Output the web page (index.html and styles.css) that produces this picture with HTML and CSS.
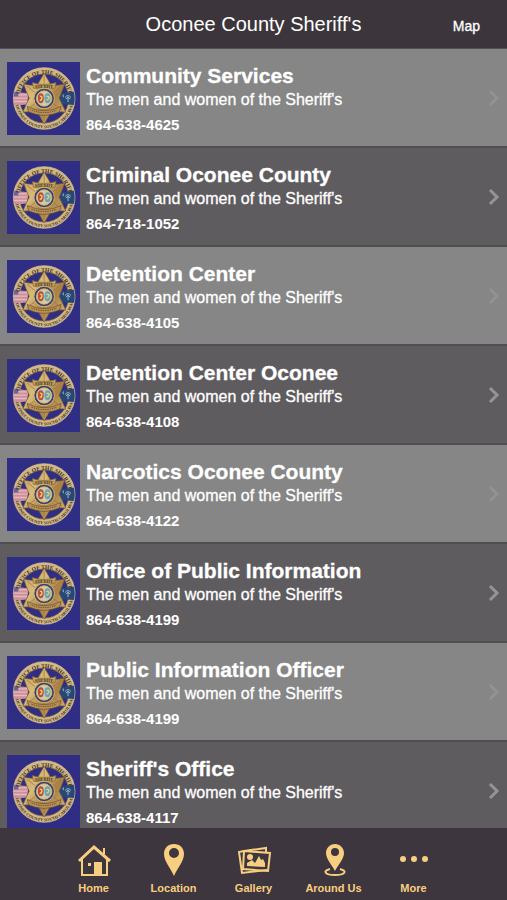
FILE: index.html
```html
<!DOCTYPE html>
<html lang="en">
<head>
<meta charset="utf-8">
<meta name="viewport" content="width=device-width, initial-scale=1">
<title>Oconee County Sheriff's</title>
<link rel="stylesheet" href="styles.css">
</head>
<body>
<header class="topbar">
  <h1 class="topbar-title">Oconee County Sheriff's</h1>
  <a class="topbar-link" href="#map">Map</a>
</header>

<main class="content">
  <ul class="list">
    <li><a class="row" href="#community"><svg class="thumb" viewBox="0 0 220 220">
      <defs>
        <linearGradient id="gold" x1="0" y1="0" x2="1" y2="1">
          <stop offset="0" stop-color="#c49a58"/>
          <stop offset="0.35" stop-color="#d9bb78"/>
          <stop offset="0.6" stop-color="#a97f42"/>
          <stop offset="1" stop-color="#dcc088"/>
        </linearGradient>
        <path id="arc-top" d="M37 124A76 76 0 1 1 187 124"/>
        <path id="arc-bottom" d="M24 112A88 88 0 0 0 200 112"/>
        <clipPath id="gap"><circle cx="112" cy="110" r="92"/></clipPath>
      </defs>
      <g id="badge">
        <rect width="220" height="220" fill="#302d84"/>
        <circle cx="112" cy="110" r="83" fill="none" stroke="#d3b883" stroke-width="19"/>
        <circle cx="112" cy="110" r="93" fill="none" stroke="#e0c890" stroke-width="2"/>
        <circle cx="112" cy="110" r="74" fill="none" stroke="#6f5836" stroke-width="2"/>
        <g clip-path="url(#gap)">
          <path d="M18 90L66 94L60 128L18 132Z" fill="#cf8f98"/>
          <path d="M18 99H62M18 109H60M18 119H60" stroke="#e3bcc0" stroke-width="4"/>
          <path d="M18 90H34V104H18Z" fill="#65659c"/>
          <path d="M158 95L206 89V130L160 127Z" fill="#254878"/>
          <path d="M184 121V105M175 107Q184 96 193 107M178 112Q184 102 190 112" stroke="#a8b8bd" stroke-width="3" fill="none"/>
          <path d="M170 98q-4 6 2 8" stroke="#a8b8bd" stroke-width="3" fill="none"/>
        </g>
        <path d="M112 34L132 68Q151 73 174 66Q166 89 157 109Q167 128 177 151Q151 149 132 152L112 187L92 152Q72 149 48 151Q57 128 67 109Q57 89 50 66Q73 73 92 68Z" fill="url(#gold)" stroke="#765a34" stroke-width="2"/>
        <path d="M112 43V79M61 73L86 94M163 73L138 94M59 144L85 125M165 144L139 125M112 141V177" stroke="#8f7042" stroke-width="2"/>
        <path d="M76 62Q112 74 148 62L144 79Q112 88 80 79Z" fill="#c9a560" stroke="#7a6037" stroke-width="2"/>
        <text class="badge-text badge-text-small" x="112" y="79" text-anchor="middle">SHERIFF</text>
        <path d="M61 134Q112 160 163 134L158 151Q112 171 66 151Z" fill="#b99155" stroke="#654d2c" stroke-width="2"/>
        <path d="M74 145Q112 160 150 145" fill="none" stroke="#5b492f" stroke-width="3" stroke-dasharray="4 3"/>
        <circle cx="112" cy="110" r="31" fill="#3e426c" stroke="#d8b66d" stroke-width="3"/>
        <circle cx="112" cy="110" r="23" fill="#d3cba7" stroke="#d8b66d" stroke-width="3"/>
        <ellipse cx="102" cy="109" rx="9" ry="15" fill="#b94f3f"/>
        <ellipse cx="122" cy="109" rx="9" ry="15" fill="#65a5b7"/>
        <path d="M99 103q8 0 6 7q-2 8-6 4M119 104q9-2 7 5q-2 5-7 6" fill="none" stroke="#edcf79" stroke-width="4"/>
        <text class="badge-text"><textPath href="#arc-top" startOffset="50%" text-anchor="middle">OFFICE OF THE SHERIFF</textPath></text>
        <text class="badge-text badge-text-low"><textPath href="#arc-bottom" startOffset="50%" text-anchor="middle">OCONEE COUNTY SOUTH CAROLINA</textPath></text>
      </g>
    </svg><div class="info"><h2 class="name">Community Services</h2><p class="about">The men and women of the Sheriff's</p><p class="phone">864-638-4625</p></div><svg class="chevron" viewBox="0 0 12 18"><path id="chevron" d="M2 2L9 9L2 16" fill="none" stroke="currentColor" stroke-width="3"/></svg></a></li>
    <li><a class="row" href="#criminal"><svg class="thumb" viewBox="0 0 220 220"><use href="#badge"/></svg><div class="info"><h2 class="name">Criminal Oconee County</h2><p class="about">The men and women of the Sheriff's</p><p class="phone">864-718-1052</p></div><svg class="chevron" viewBox="0 0 12 18"><use href="#chevron"/></svg></a></li>
    <li><a class="row" href="#detention"><svg class="thumb" viewBox="0 0 220 220"><use href="#badge"/></svg><div class="info"><h2 class="name">Detention Center</h2><p class="about">The men and women of the Sheriff's</p><p class="phone">864-638-4105</p></div><svg class="chevron" viewBox="0 0 12 18"><use href="#chevron"/></svg></a></li>
    <li><a class="row" href="#detention-oconee"><svg class="thumb" viewBox="0 0 220 220"><use href="#badge"/></svg><div class="info"><h2 class="name">Detention Center Oconee</h2><p class="about">The men and women of the Sheriff's</p><p class="phone">864-638-4108</p></div><svg class="chevron" viewBox="0 0 12 18"><use href="#chevron"/></svg></a></li>
    <li><a class="row" href="#narcotics"><svg class="thumb" viewBox="0 0 220 220"><use href="#badge"/></svg><div class="info"><h2 class="name">Narcotics Oconee County</h2><p class="about">The men and women of the Sheriff's</p><p class="phone">864-638-4122</p></div><svg class="chevron" viewBox="0 0 12 18"><use href="#chevron"/></svg></a></li>
    <li><a class="row" href="#public-information"><svg class="thumb" viewBox="0 0 220 220"><use href="#badge"/></svg><div class="info"><h2 class="name">Office of Public Information</h2><p class="about">The men and women of the Sheriff's</p><p class="phone">864-638-4199</p></div><svg class="chevron" viewBox="0 0 12 18"><use href="#chevron"/></svg></a></li>
    <li><a class="row" href="#information-officer"><svg class="thumb" viewBox="0 0 220 220"><use href="#badge"/></svg><div class="info"><h2 class="name">Public Information Officer</h2><p class="about">The men and women of the Sheriff's</p><p class="phone">864-638-4199</p></div><svg class="chevron" viewBox="0 0 12 18"><use href="#chevron"/></svg></a></li>
    <li><a class="row" href="#office"><svg class="thumb" viewBox="0 0 220 220"><use href="#badge"/></svg><div class="info"><h2 class="name">Sheriff's Office</h2><p class="about">The men and women of the Sheriff's</p><p class="phone">864-638-4117</p></div><svg class="chevron" viewBox="0 0 12 18"><use href="#chevron"/></svg></a></li>
  </ul>
</main>

<nav class="tabs">
  <a class="tab" href="#home">
    <svg class="tab-icon" viewBox="0 0 36 36" fill="none" stroke="currentColor" stroke-width="2"><path d="M6 17V33H31V17"/><path d="M3 19L18 5L34 19" stroke-width="3"/><path d="M28 12V6"/><path d="M19 33V21H25V33Z" fill="currentColor"/><path d="M12 21H15V24H12Z" fill="currentColor" stroke="none"/></svg>
    <span>Home</span>
  </a>
  <a class="tab" href="#location">
    <svg class="tab-icon" viewBox="0 0 36 36" fill="currentColor"><path fill-rule="evenodd" d="M18 2C12 2 8 6 8 12C8 19 15 27 18 34C21 27 28 19 28 12C28 6 24 2 18 2ZM18 6A5 5 0 1 1 18 16A5 5 0 1 1 18 6Z"/></svg>
    <span>Location</span>
  </a>
  <a class="tab" href="#gallery">
    <svg class="tab-icon" viewBox="0 0 36 36" fill="none" stroke="currentColor" stroke-width="2"><path d="M8 9L30 6V10M31 28L6 31L3 10L8 9"/><path d="M8 9L34 11L32 29L7 27Z"/><path d="M11 24V21L16 18L19 21L23 14L25 18L27 17L29 21V25Z" fill="currentColor" stroke="none"/><circle cx="14" cy="15" r="3" fill="currentColor" stroke="none"/></svg>
    <span>Gallery</span>
  </a>
  <a class="tab" href="#around">
    <svg class="tab-icon" viewBox="0 0 36 36" fill="currentColor"><path fill-rule="evenodd" d="M19 2C14 2 10 6 10 11C10 17 16 23 19 29C22 23 28 17 28 11C28 6 24 2 19 2ZM19 6A4 4 0 1 1 19 14A4 4 0 1 1 19 6Z"/><path d="M14 27C6 29 9 33 19 33S32 29 24 27" fill="none" stroke="currentColor" stroke-width="2"/></svg>
    <span>Around Us</span>
  </a>
  <a class="tab" href="#more">
    <svg class="tab-icon" viewBox="0 0 36 36" fill="currentColor"><circle cx="7" cy="17" r="3"/><circle cx="18" cy="17" r="3"/><circle cx="29" cy="17" r="3"/></svg>
    <span>More</span>
  </a>
</nav>
</body>
</html>
```
FILE: styles.css
```css
* {
  box-sizing: border-box;
}

body {
  display: flex;
  flex-direction: column;
  height: 100vh;
  margin: 0;
  background: #3e363e;
  color: #fff;
  font-family: "Liberation Sans", Arial, sans-serif;
}

a {
  color: inherit;
  text-decoration: none;
}

h1, h2, p, ul {
  margin: 0;
  padding: 0;
}

.topbar {
  display: grid;
  flex: none;
  grid-template-columns: 1fr auto 1fr;
  align-items: center;
  height: 49px;
  padding: 0 27px;
  background: #3c363c;
  border-bottom: 1px solid #555055;
}

.topbar-title {
  grid-column: 2;
  font-size: 20px;
  font-weight: 400;
  line-height: 24px;
}

.topbar-link {
  justify-self: end;
  padding-top: 4px;
  font-size: 14px;
  line-height: 20px;
  -webkit-text-stroke: 0.3px;
}

.content {
  flex: 1;
  min-height: 0;
  overflow-y: auto;
  scrollbar-width: none;
}

.list {
  list-style: none;
}

.row {
  display: flex;
  gap: 6px;
  height: 99px;
  padding: 13px 7px 0;
  background: #868686;
  border-bottom: 2px solid #504e51;
}

li:nth-child(even) .row {
  background: #5f5c60;
}

.thumb {
  flex: none;
  width: 73px;
  height: 73px;
}

.info {
  flex: 1;
  min-width: 0;
}

.name {
  padding-top: 1px;
  font-size: 21px;
  font-weight: 700;
  line-height: 26px;
  -webkit-text-stroke: 0.3px;
}

.about {
  font-size: 16px;
  line-height: 22px;
  -webkit-text-stroke: 0.3px;
}

.phone {
  padding-top: 3px;
  font-size: 15px;
  font-weight: 700;
  line-height: 22px;
}

.chevron {
  flex: none;
  align-self: center;
  width: 12px;
  height: 18px;
  margin-bottom: 12px;
  color: #959395;
}

li:nth-child(odd) .chevron {
  color: #929292;
}

.badge-text {
  fill: #3d3328;
  font-family: "Liberation Serif", serif;
  font-size: 17px;
  font-weight: 700;
}

.badge-text-low {
  font-size: 13px;
}

.badge-text-small {
  font-size: 13px;
}

.tabs {
  display: flex;
  flex: none;
  justify-content: center;
  height: 72px;
  padding-top: 14px;
  background: #3e363e;
  color: #f8cf80;
}

.tab {
  display: flex;
  flex: 0 1 80px;
  flex-direction: column;
  gap: 2px;
  align-items: center;
  font-size: 11px;
  font-weight: 700;
  line-height: 16px;
  white-space: nowrap;
}

.tab-icon {
  width: 36px;
  height: 36px;
}
```
